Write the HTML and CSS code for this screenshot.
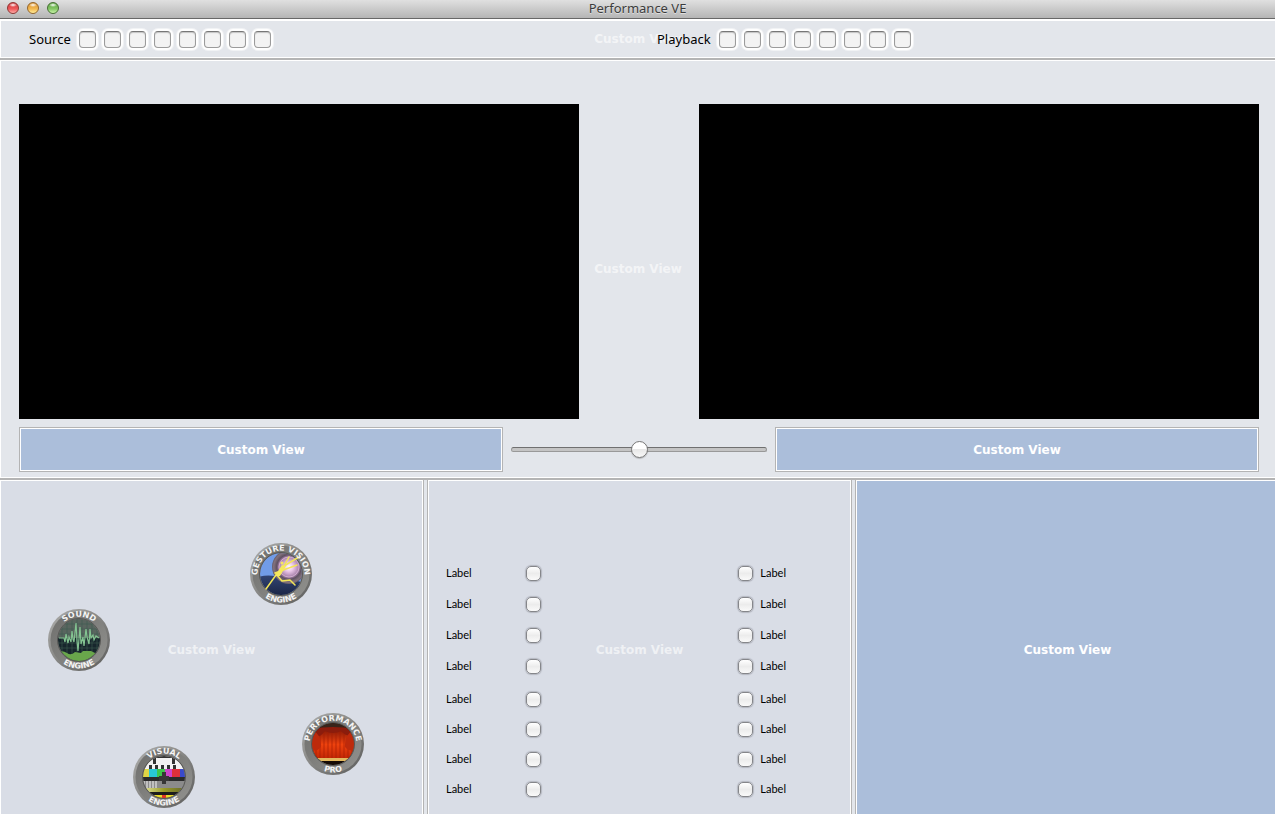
FILE: index.html
```html
<!DOCTYPE html>
<html lang="en">
<head>
<meta charset="utf-8">
<title>Performance VE</title>
<link rel="stylesheet" href="styles.css">
</head>
<body>
<div class="window">
  <header class="titlebar">
    <div class="lights">
      <button class="light light-red" aria-label="Close"></button>
      <button class="light light-yellow" aria-label="Minimize"></button>
      <button class="light light-green" aria-label="Zoom"></button>
    </div>
    <h1 class="title">Performance VE</h1>
  </header>

  <section class="toolbar">
    <span class="placeholder faint">Custom View</span>
    <div class="channel" role="group" aria-labelledby="source">
      <span class="channel-name" id="source">Source</span>
      <input type="checkbox" class="cell" aria-label="Source 1">
      <input type="checkbox" class="cell" aria-label="Source 2">
      <input type="checkbox" class="cell" aria-label="Source 3">
      <input type="checkbox" class="cell" aria-label="Source 4">
      <input type="checkbox" class="cell" aria-label="Source 5">
      <input type="checkbox" class="cell" aria-label="Source 6">
      <input type="checkbox" class="cell" aria-label="Source 7">
      <input type="checkbox" class="cell" aria-label="Source 8">
    </div>
    <div class="channel" role="group" aria-labelledby="playback">
      <span class="channel-name" id="playback">Playback</span>
      <input type="checkbox" class="cell" aria-label="Playback 1">
      <input type="checkbox" class="cell" aria-label="Playback 2">
      <input type="checkbox" class="cell" aria-label="Playback 3">
      <input type="checkbox" class="cell" aria-label="Playback 4">
      <input type="checkbox" class="cell" aria-label="Playback 5">
      <input type="checkbox" class="cell" aria-label="Playback 6">
      <input type="checkbox" class="cell" aria-label="Playback 7">
      <input type="checkbox" class="cell" aria-label="Playback 8">
    </div>
  </section>

  <section class="stage">
    <span class="placeholder faint">Custom View</span>
    <div class="screens">
      <div class="screen"></div>
      <div class="screen"></div>
    </div>
    <div class="mixer">
      <div class="well"><span class="caption">Custom View</span></div>
      <input type="range" class="fader" min="0" max="100" value="50" aria-label="Crossfade">
      <div class="well"><span class="caption">Custom View</span></div>
    </div>
  </section>

  <main class="panels">
    <section class="panel">
      <span class="placeholder faint">Custom View</span>
      <button class="badge badge-gesture" aria-label="Gesture Vision Engine">
        <svg viewBox="0 0 62 62">
          <defs>
            <linearGradient id="rim" x1="0" y1="0" x2="1" y2="1"><stop offset="0" stop-color="#b0b0ae"/><stop offset=".5" stop-color="#858583"/><stop offset="1" stop-color="#5c5c5b"/></linearGradient>
            <linearGradient id="ring" x1="0" y1="0" x2="1" y2="1"><stop offset="0" stop-color="#6e6e6c"/><stop offset="1" stop-color="#92928f"/></linearGradient>
            <clipPath id="lens"><circle cx="31" cy="31" r="21"/></clipPath>
            <path id="arc-top" d="M8.500 38A23.500 23.500 0 1 1 53.500 38"/>
            <path id="arc-bottom" d="M2.500 31A28.500 28.500 0 0 0 59.500 31"/>
            <linearGradient id="night" x1="0" y1="0" x2="0" y2="1"><stop offset="0" stop-color="#324473"/><stop offset="1" stop-color="#1a2442"/></linearGradient>
            <radialGradient id="orb"><stop offset="0" stop-color="#fff"/><stop offset=".25" stop-color="#ecc8ea"/><stop offset=".6" stop-color="#a57ea8"/><stop offset=".72" stop-color="#5f5161"/><stop offset=".9" stop-color="#84737e"/><stop offset="1" stop-color="#655c68"/></radialGradient>
          </defs>
          <circle cx="31" cy="31" r="31" fill="url(#rim)"/><circle cx="31" cy="31" r="28.500" fill="url(#ring)"/>
          <g clip-path="url(#lens)">
            <path d="M9 9H53V53H9Z" fill="#719ce8"/>
            <path d="M8 34Q22 29 54 40V54H8Z" fill="url(#night)"/>
            <circle cx="39" cy="24" r="17" fill="url(#orb)"/>
            <circle cx="39" cy="24" r="10" fill="none" stroke="#d9b9d4" stroke-width=".8"/>
          </g>
          <circle cx="31" cy="31" r="21.500" fill="none" stroke="#575755"/>
          <path d="M16 46L26 32L34 23L49 14M34 23L39 14M25 30L47 22M26 31L32 38L40 37L45 42" fill="none" stroke="#f2e558" stroke-width="1.500" stroke-linecap="round" stroke-linejoin="round"/>
          <path d="M25 33L32 22L36 23L30 33Z" fill="#f5e85e"/>
          <circle cx="32" cy="20" r="1.500" fill="#f5e85e"/>
          <text class="badge-text"><textPath href="#arc-top" startOffset="50%">GESTURE VISION</textPath></text>
          <text class="badge-text"><textPath href="#arc-bottom" startOffset="50%">ENGINE</textPath></text>
        </svg>
      </button>
      <button class="badge badge-sound" aria-label="Sound Engine">
        <svg viewBox="0 0 62 62">
          <circle cx="31" cy="31" r="31" fill="url(#rim)"/><circle cx="31" cy="31" r="28.500" fill="url(#ring)"/>
          <g clip-path="url(#lens)">
            <path d="M9 9H53V29H9Z" fill="#59655f"/>
            <path d="M9 29H53V54H9Z" fill="#17262c"/>
            <path d="M9 15H53M9 20H53M9 25H53M9 34H53M9 39H53M14 9V53M19 9V53M24 9V53M29 9V53M34 9V53M39 9V53M44 9V53M49 9V53" stroke="#3c5b51" stroke-width=".6"/>
            <path d="M9 43Q15 41 19 44T27 43L33 44L35 42H43L47 44H54V54H9Z" fill="#69a64b"/>
          </g>
          <path d="M11 29H16L17 33L18 25L20 34L21 28L23 33L24 22L25 30L26 33L28 14L29 32L30 42L32 18L33 35L35 28L36 37L38 20L39 28L41 35L42 20L43 29L45 26L46 31L48 27L51 29" fill="none" stroke="#83c391" stroke-width="1.200"/>
          <circle cx="31" cy="31" r="21.500" fill="none" stroke="#575755"/>
          <text class="badge-text"><textPath href="#arc-top" startOffset="50%">SOUND</textPath></text>
          <text class="badge-text"><textPath href="#arc-bottom" startOffset="50%">ENGINE</textPath></text>
        </svg>
      </button>
      <button class="badge badge-performance" aria-label="Performance Pro">
        <svg viewBox="0 0 62 62">
          <defs><linearGradient id="velvet" x1="0" y1="0" x2="0" y2="1"><stop offset="0" stop-color="#8a1c08"/><stop offset=".5" stop-color="#ee420e"/><stop offset="1" stop-color="#c02505"/></linearGradient></defs>
          <circle cx="31" cy="31" r="31" fill="url(#rim)"/><circle cx="31" cy="31" r="28.500" fill="url(#ring)"/>
          <g clip-path="url(#lens)">
            <path d="M9 9H53V53H9Z" fill="#160b06"/>
            <path d="M9 17H53V46H9Z" fill="url(#velvet)"/>
            <path d="M14 18V46M18 18V46M22 18V46M26 18V46M30 18V46M34 18V46M38 18V46M42 18V46M46 18V46M50 18V46" stroke="#a81e05" stroke-width=".7"/>
            <path d="M9 9H53V16H9Z" fill="#38241a"/>
            <path d="M9 16Q31 12 53 16V19Q46 26 39 18Q31 22 23 18Q16 27 9 23Z" fill="#8b1c0c"/>
            <path d="M10 17Q20 22 19 34Q15 39 9 37ZM52 17Q42 22 43 34Q47 39 53 37Z" fill="#bd2a0b"/>
            <path d="M9 45H53V48H9Z" fill="#e2b85e"/>
          </g>
          <circle cx="31" cy="31" r="21.500" fill="none" stroke="#575755"/>
          <text class="badge-text"><textPath href="#arc-top" startOffset="50%">PERFORMANCE</textPath></text>
          <text class="badge-text"><textPath href="#arc-bottom" startOffset="50%">PRO</textPath></text>
        </svg>
      </button>
      <button class="badge badge-visual" aria-label="Visual Engine">
        <svg viewBox="0 0 62 62">
          <defs><linearGradient id="olive"><stop offset="0" stop-color="#e7e8a0"/><stop offset=".5" stop-color="#999b29"/><stop offset="1" stop-color="#62652c"/></linearGradient></defs>
          <circle cx="31" cy="31" r="31" fill="url(#rim)"/><circle cx="31" cy="31" r="28.500" fill="url(#ring)"/>
          <g clip-path="url(#lens)">
            <path d="M9 9H53V23H9Z" fill="#f2f2f2"/>
            <path d="M20 9H42V12H20ZM20 12H23V18H20ZM39 12H42V18H39Z" fill="#333"/>
            <path d="M16 19H19V23H16ZM22 19H25V23H22ZM28 19H31V23H28ZM34 19H37V23H34ZM40 19H43V23H40Z" fill="#333"/>
            <path d="M9 23H16V31H9Z" fill="#e0d545"/><path d="M16 23H24V31H16Z" fill="#28c8d5"/><path d="M24 23H32V31H24Z" fill="#3dc64b"/><path d="M32 23H39V31H32Z" fill="#cd44cb"/><path d="M39 23H47V31H39Z" fill="#de303a"/><path d="M47 23H54V31H47Z" fill="#3a4acb"/>
            <path d="M9 31H53V35H9Z" fill="#2b2b2b"/>
            <path d="M9 35H53V42H9Z" fill="#8b8b8b"/>
            <path d="M11 35V42M14 35V42M17 35V42M20 35V42M23 35V42" stroke="#ddd" stroke-width="1.300"/>
            <path d="M29 26H33V30H36V35H33V38H29V35H26V30H29Z" fill="#373737"/>
            <path d="M9 42H53V46H9Z" fill="url(#olive)"/>
            <path d="M9 46H53V54H9Z" fill="#1c1c1c"/>
            <path d="M20 49H42V53H20Z" fill="#e9da28"/><path d="M29 49H33V53H29Z" fill="#e23425"/>
          </g>
          <circle cx="31" cy="31" r="21.500" fill="none" stroke="#575755"/>
          <text class="badge-text"><textPath href="#arc-top" startOffset="50%">VISUAL</textPath></text>
          <text class="badge-text"><textPath href="#arc-bottom" startOffset="50%">ENGINE</textPath></text>
        </svg>
      </button>
    </section>

    <section class="panel panel-options">
      <span class="placeholder faint">Custom View</span>
      <div class="options">
        <div class="bank">
          <label class="option">Label<input type="checkbox" class="tick"></label>
          <label class="option">Label<input type="checkbox" class="tick"></label>
          <label class="option">Label<input type="checkbox" class="tick"></label>
          <label class="option">Label<input type="checkbox" class="tick"></label>
        </div>
        <div class="bank bank-tight">
          <label class="option">Label<input type="checkbox" class="tick"></label>
          <label class="option">Label<input type="checkbox" class="tick"></label>
          <label class="option">Label<input type="checkbox" class="tick"></label>
          <label class="option">Label<input type="checkbox" class="tick"></label>
        </div>
      </div>
      <div class="options options-right">
        <div class="bank">
          <label class="option"><input type="checkbox" class="tick">Label</label>
          <label class="option"><input type="checkbox" class="tick">Label</label>
          <label class="option"><input type="checkbox" class="tick">Label</label>
          <label class="option"><input type="checkbox" class="tick">Label</label>
        </div>
        <div class="bank bank-tight">
          <label class="option"><input type="checkbox" class="tick">Label</label>
          <label class="option"><input type="checkbox" class="tick">Label</label>
          <label class="option"><input type="checkbox" class="tick">Label</label>
          <label class="option"><input type="checkbox" class="tick">Label</label>
        </div>
      </div>
    </section>

    <section class="panel panel-blue">
      <span class="placeholder">Custom View</span>
    </section>
  </main>
</div>
</body>
</html>
```

FILE: styles.css
```css
* {
  box-sizing: border-box;
}

body {
  margin: 0;
  font-family: "Noto Sans", "Open Sans", sans-serif;
  font-size: 13px;
  line-height: 16px;
  color: #000;
}

.window {
  display: flex;
  flex-direction: column;
  height: 100vh;
  min-height: 814px;
  overflow: hidden;
  background: #e3e6eb;
}

/* Title bar */
.titlebar {
  display: grid;
  grid-template-columns: 1fr auto 1fr;
  align-items: center;
  height: 19px;
  padding: 0 7px 2px;
  background: linear-gradient(#e0e0e0, #b5b5b5);
  border-bottom: 1px solid #686868;
}

.lights {
  display: flex;
  gap: 8px;
}

.light {
  width: 12px;
  height: 12px;
  padding: 0;
  border: 1px solid;
  border-radius: 50%;
}

.light-red {
  border-color: #8f3432;
  background: radial-gradient(ellipse 4px 2px at 50% 20%, #fff, transparent), linear-gradient(#cf3a3c, #f0595b 60%, #ffb0ab);
}

.light-yellow {
  border-color: #94652a;
  background: radial-gradient(ellipse 4px 2px at 50% 20%, #fff, transparent), linear-gradient(#d8902f, #f4b950 60%, #ffee9c);
}

.light-green {
  border-color: #456f33;
  background: radial-gradient(ellipse 4px 2px at 50% 20%, #fff, transparent), linear-gradient(#5da440, #86c867 60%, #cbf5aa);
}

.title {
  margin: 0;
  font-size: 13px;
  font-weight: 400;
  color: #3c3c3c;
  text-shadow: 0 1px 0 rgba(255, 255, 255, 0.5);
}

/* Text in the middle of an empty view */
.placeholder,
.caption {
  font-family: "DejaVu Sans", sans-serif;
  font-size: 12px;
  font-weight: 700;
  color: #fff;
  white-space: nowrap;
}

.placeholder {
  position: absolute;
  inset: 0;
  display: flex;
  align-items: center;
  justify-content: center;
}

.faint {
  color: rgba(255, 255, 255, 0.6);
}

/* Toolbar */
.toolbar {
  position: relative;
  display: grid;
  grid-template-columns: 1fr 1fr;
  column-gap: 19px;
  height: 39px;
  padding: 0 9px 0 28px;
  border: 1px solid #fff;
  border-width: 2px 0 1px 1px;
}

.channel {
  position: relative;
  display: flex;
  align-items: center;
  gap: 8px;
}

.cell {
  appearance: none;
  flex: none;
  width: 17px;
  height: 17px;
  margin: 0;
  border: 1px solid #9b9b9b;
  border-top-color: #777;
  border-radius: 4px;
  background: #f3f3f3;
  box-shadow: inset 0 1px 1px #c4c4c4, 0 0 0 2px #fff, 0 0 0 3px rgba(255, 255, 255, 0.5);
}

/* Video stage */
.stage {
  position: relative;
  margin-top: 2px;
  padding: 43px 16px 5px 18px;
  border: 1px solid #fff;
  border-width: 1px 0 1px 1px;
  box-shadow: 0 -2px 0 #b4b4b4, 0 2px 0 #b4b4b4;
}

.screens {
  display: grid;
  grid-template-columns: 1fr 1fr;
  column-gap: 120px;
}

.screen {
  aspect-ratio: 16 / 9;
  background: #000;
}

.mixer {
  display: grid;
  grid-template-columns: 1fr 256px 1fr;
  column-gap: 8px;
  align-items: center;
  margin-top: 8px;
}

.well {
  display: flex;
  align-items: center;
  justify-content: center;
  height: 45px;
  border: 1px solid #b4b4b4;
  background: #abbeda;
  box-shadow: inset 0 0 0 1px #fff;
}

.fader {
  appearance: none;
  width: 100%;
  height: 17px;
  margin: 0;
  background: none;
}

.fader::-webkit-slider-runnable-track {
  height: 5px;
  border: 1px solid #999;
  border-top-color: #707070;
  border-radius: 3px;
  background: #c4c4c4;
}

.fader::-webkit-slider-thumb {
  appearance: none;
  width: 17px;
  height: 17px;
  margin-top: -7px;
  border: 1px solid #777;
  border-radius: 50%;
  background: linear-gradient(#fff 50%, #e8e8e8 50%, #f8f8f8);
  box-shadow: 0 1px 1px rgba(0, 0, 0, 0.2);
}

/* Lower panels run past the right and bottom window edges */
.panels {
  flex: 1;
  display: grid;
  grid-template-columns: 1fr 1fr 1fr;
  column-gap: 5px;
  margin: 2px -4px -6px 0;
}

.panel {
  position: relative;
  border: 1px solid #fff;
  background: #d9dde6;
  box-shadow: 0 0 0 1px #b4b4b4;
}

.panel-blue {
  background: #abbeda;
}

/* Engine badges on the free canvas */
.badge {
  position: absolute;
  width: 62px;
  height: 62px;
  padding: 0;
  border: 0;
  border-radius: 50%;
  background: none;
}

.badge svg {
  display: block;
  width: 100%;
  height: 100%;
}

.badge-text {
  font-family: "DejaVu Sans", sans-serif;
  font-size: 8px;
  font-weight: 700;
  fill: #f4f4f4;
  text-anchor: middle;
}

.badge-gesture {
  left: 249px;
  top: 62px;
}

.badge-sound {
  left: 47px;
  top: 128px;
}

.badge-performance {
  left: 301px;
  top: 232px;
}

.badge-visual {
  left: 132px;
  top: 265px;
}

/* Option columns */
.panel-options {
  display: flex;
  justify-content: space-between;
  padding: 84px 64px 0 17px;
}

.options {
  position: relative;
  display: flex;
  flex-direction: column;
  gap: 17px;
  width: 95px;
}

.options-right {
  width: 48px;
}

.bank {
  display: flex;
  flex-direction: column;
  gap: 15px;
}

.bank-tight {
  gap: 14px;
}

.option {
  display: flex;
  align-items: center;
  justify-content: space-between;
  height: 16px;
  font-family: Lato, "Noto Sans", sans-serif;
  font-size: 11px;
}

.tick {
  appearance: none;
  width: 15px;
  height: 15px;
  margin: 0;
  border: 1px solid #85868a;
  border-radius: 5px;
  background: linear-gradient(#fff, #ececec 50%, #fafafa);
  box-shadow: 0 0 1px 1px rgba(70, 70, 80, 0.25);
}
```
